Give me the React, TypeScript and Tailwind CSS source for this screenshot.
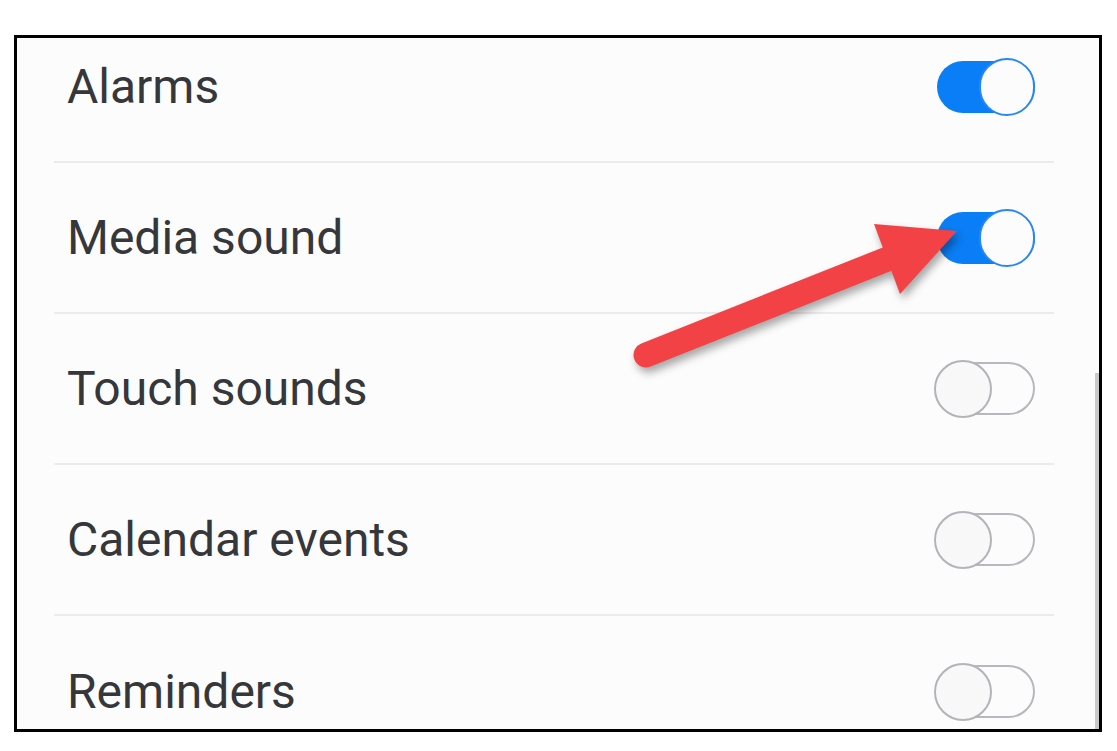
const ROWS = [
  { label: "Alarms", on: true },
  { label: "Media sound", on: true },
  { label: "Touch sounds", on: false },
  { label: "Calendar events", on: false },
  { label: "Reminders", on: false },
];

const Toggle = ({ on }: { on: boolean }) =>
  on ? (
    <div className="flex items-center justify-end w-[98px] h-[52px] ml-[3px] rounded-full bg-[#0a7ef6]">
      <div className="w-[56px] h-[58px] -my-[3px] shrink-0 rounded-full bg-[#fcfcfd] border-2 border-[#2a86f2]" />
    </div>
  ) : (
    <div className="flex items-center w-[91px] h-[53px] ml-[10px] rounded-full border-2 border-[#b8b8bc] bg-[#fcfcfd]">
      <div className="w-[58px] h-[58px] -ml-[12px] shrink-0 rounded-full bg-[#f8f8f9] border-2 border-[#b4b4b8]" />
    </div>
  );

const App = () => {
  return (
    <div className="relative w-[1117px] h-[751px] bg-white pt-[35px] pl-[14px] overflow-hidden">
      <div className="flex w-[1088px] h-[697px] border-[3px] border-black bg-[#fcfcfd] overflow-hidden">
        <div className="flex-1 mt-[-26px] pl-[37px] pr-[41px]">
          {ROWS.map((r, i) => (
            <div key={r.label} className={`flex items-center justify-between h-[151px] pl-[13px] pr-[19px] ${i < ROWS.length - 1 ? "border-b-2 border-[#ebebed]" : ""}`}>
              <span className="text-[48px] text-[#36373a]" style={{ fontFamily: "Roboto, 'Noto Sans', sans-serif" }}>
                {r.label}
              </span>
              <Toggle on={r.on} />
            </div>
          ))}
        </div>
        <div className="flex flex-col w-[4px] pt-[335px]">
          <div className="flex-1 bg-[#c9c9cc]" />
        </div>
      </div>

      <svg
        className="absolute left-0 top-0 pointer-events-none"
        width={1117}
        height={751}
        viewBox="0 0 1117 751"
        style={{ filter: "drop-shadow(3px 5px 4px rgba(0,0,0,0.35))" }}
      >
        <line x1={646} y1={355} x2={895} y2={256} stroke="#f34245" strokeWidth={25} strokeLinecap="round" />
        <polygon points="874,224 957,231 900,294" fill="#f34245" />
      </svg>
    </div>
  );
};

export default App;
